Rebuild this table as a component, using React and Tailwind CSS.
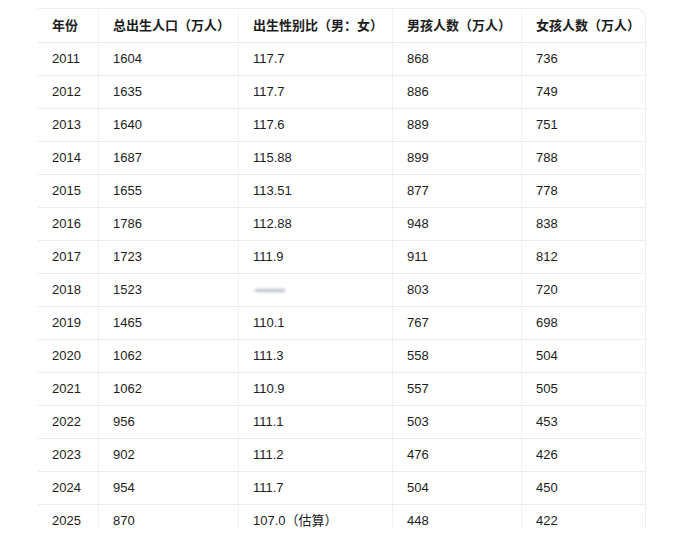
import React from 'react';

const rows = [
  ['2011', '1604', '117.7', '868', '736'],
  ['2012', '1635', '117.7', '886', '749'],
  ['2013', '1640', '117.6', '889', '751'],
  ['2014', '1687', '115.88', '899', '788'],
  ['2015', '1655', '113.51', '877', '778'],
  ['2016', '1786', '112.88', '948', '838'],
  ['2017', '1723', '111.9', '911', '812'],
  ['2018', '1523', null, '803', '720'],
  ['2019', '1465', '110.1', '767', '698'],
  ['2020', '1062', '111.3', '558', '504'],
  ['2021', '1062', '110.9', '557', '505'],
  ['2022', '956', '111.1', '503', '453'],
  ['2023', '902', '111.2', '476', '426'],
  ['2024', '954', '111.7', '504', '450'],
  ['2025', '870', '107.0（估算）', '448', '422'],
];

const headers = ['年份', '总出生人口（万人）', '出生性别比（男：女）', '男孩人数（万人）', '女孩人数（万人）'];
const widths = ['w-[60px]', 'w-[140px]', 'w-[154px]', 'w-[129px]', 'w-[125px]'];

const Cell = ({ i, children, head }) => (
  <div
    className={`${widths[i]} shrink-0 flex items-center pl-[14px] ${i > 0 ? 'border-l border-[#f1f1f1]' : ''} ${head ? 'font-semibold' : ''}`}
  >
    {children}
  </div>
);

export default function App() {
  return (
    <div className="w-[674px] h-[543px] bg-white pt-[8px] pl-[38px]" style={{ fontFamily: '"Liberation Sans", "Noto Sans CJK SC", sans-serif' }}>
      {/* table, cut off at the bottom like the screenshot */}
      <div className="w-[608px] h-[520px] overflow-hidden border-t border-r border-[#ededed] rounded-tr-[10px] text-[13px] text-[#1c1c1c]">
        <div className="flex h-[34px] border-b border-[#e9e9e9]">
          {headers.map((h, i) => (
            <Cell key={i} i={i} head>{h}</Cell>
          ))}
        </div>
        {rows.map((r) => (
          <div key={r[0]} className="flex h-[33px] border-b border-[#ececec]">
            {r.map((v, i) => (
              <Cell key={i} i={i}>
                {v === null ? (
                  <div className="w-[30px] h-[3px] ml-[2px] bg-gray-400/70 blur-[1.5px]" />
                ) : (
                  v
                )}
              </Cell>
            ))}
          </div>
        ))}
      </div>
    </div>
  );
}
